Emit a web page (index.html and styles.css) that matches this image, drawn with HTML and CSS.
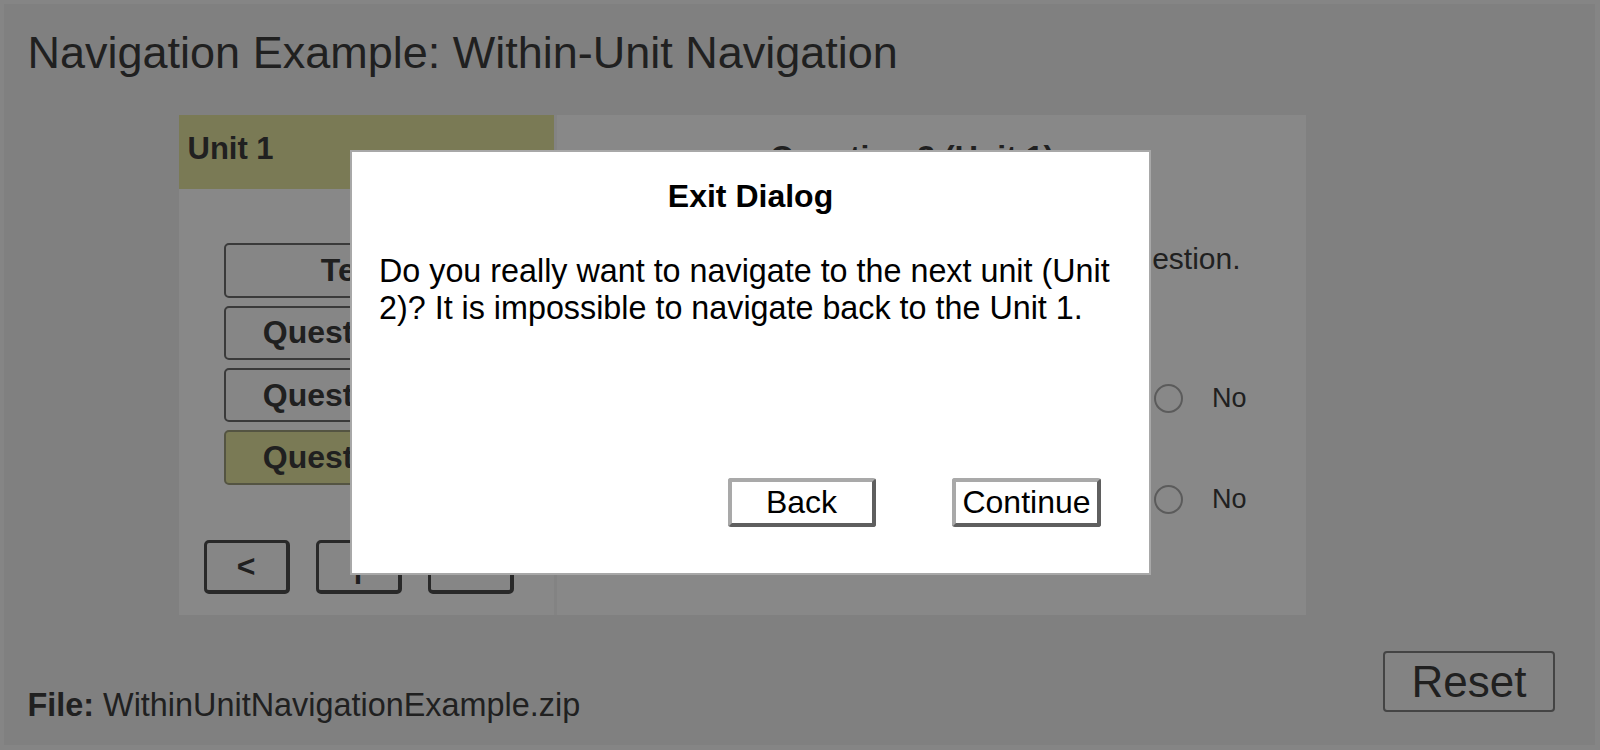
FILE: index.html
```html
<!DOCTYPE html>
<html lang="en">
<head>
<meta charset="utf-8">
<title>Navigation Example: Within-Unit Navigation</title>
<link rel="stylesheet" href="styles.css">
</head>
<body>
<div class="page">
  <h1 class="title">Navigation Example: Within-Unit Navigation</h1>

  <div class="player">
    <aside class="unit-nav">
      <div class="unit-header">Unit 1</div>
      <div class="item-list">
        <button class="item">Text</button>
        <button class="item">Question 1</button>
        <button class="item">Question 2</button>
        <button class="item current">Question 3</button>
      </div>
      <div class="pager">
        <button class="pager-btn">&lt;</button>
        <button class="pager-btn">|</button>
        <button class="pager-btn">&gt;</button>
      </div>
    </aside>

    <section class="content">
      <h2 class="q-title">Question 3 (Unit 1)</h2>
      <p class="q-intro">Please choose one answer for each question.</p>
      <div class="q-row">
        <span class="q-text">Did you like the text?</span>
        <label class="opt"><span class="radio"></span>Yes</label>
        <label class="opt"><span class="radio"></span>No</label>
      </div>
      <div class="q-row">
        <span class="q-text">Was the text easy to read?</span>
        <label class="opt"><span class="radio"></span>Yes</label>
        <label class="opt"><span class="radio"></span>No</label>
      </div>
    </section>
  </div>

  <div class="footer">
    <div class="file"><b>File:</b> WithinUnitNavigationExample.zip</div>
    <button class="reset">Reset</button>
  </div>
</div>

<div class="overlay"></div>

<div class="dialog" role="dialog" aria-labelledby="dlg-title">
  <div class="dialog-title" id="dlg-title">Exit Dialog</div>
  <div class="dialog-body">Do you really want to navigate to the next unit (Unit 2)? It is impossible to navigate back to the Unit 1.</div>
  <div class="dialog-actions">
    <button class="dlg-btn">Back</button>
    <button class="dlg-btn">Continue</button>
  </div>
</div>
</body>
</html>
```

FILE: styles.css
```css
* {
  box-sizing: border-box;
}

html, body {
  margin: 0;
  padding: 0;
  height: 100%;
}

body {
  background: #f2f2f2;
  font-family: "Liberation Sans", Arial, sans-serif;
  color: #3b3b3b;
  overflow: hidden;
}

.page {
  margin: 4px 5px 5px 4px;
  height: calc(100% - 9px);
  background: #e9e9e9;
  display: flex;
  flex-direction: column;
}

.title {
  margin: 22.6px 0 0 23.5px;
  font-size: 45px;
  font-weight: normal;
  line-height: normal;
}

/* ---------- player ---------- */
.player {
  margin: 36.7px 0 0 174.5px;
  width: 1127px;
  height: 500px;
  background: #f7f7f7;
  display: flex;
}

.unit-nav {
  width: 378px;
  border-right: 3px solid #eeeeee;
  display: flex;
  flex-direction: column;
}

.unit-header {
  height: 74px;
  padding: 16px 9px;
  background: #dfdf9c;
  font-size: 31px;
  font-weight: bold;
  line-height: 36px;
}

.item-list {
  margin: 54px 0 0 45px;
  display: flex;
  flex-direction: column;
  gap: 8px;
}

.item {
  width: 244px;
  height: 54.33px;
  padding: 0;
  border: 2px solid #6a6a6a;
  border-radius: 5px;
  background: #f5f5f5;
  color: #3b3b3b;
  font-family: inherit;
  font-size: 32px;
  font-weight: bold;
}

.item:first-child {
  padding-left: 14px;
}

.item.current {
  background: #dfdf9c;
  border-color: #9a9a78;
}

.pager {
  margin: 55px 0 0 25px;
  display: flex;
  gap: 26px;
}

.pager-btn {
  width: 86px;
  height: 54px;
  padding: 0;
  border-style: solid;
  border-color: #4c4c4c;
  border-width: 3px 4px 4px 3px;
  border-radius: 5px;
  background: #f5f5f5;
  color: #3b3b3b;
  font-family: inherit;
  font-size: 32px;
  font-weight: bold;
}

.content {
  flex: 1;
  padding: 23.5px 38px 0 0;
}

.q-title {
  margin: 0;
  text-align: center;
  font-size: 32px;
  font-weight: bold;
  line-height: normal;
}

.q-intro {
  margin: 66px 0 0 0;
  text-align: center;
  font-size: 30px;
  line-height: normal;
  padding-left: 50px;
}

.q-row {
  margin-top: 51.5px;
  height: 50px;
  display: flex;
  align-items: center;
  padding-right: 21px;
  font-size: 27px;
}

.q-intro + .q-row {
  margin-top: 97.5px;
}

.q-text {
  flex: 1;
  padding-left: 40px;
}

.opt {
  display: flex;
  align-items: center;
  margin-left: 26px;
}

.radio {
  width: 29px;
  height: 29px;
  border: 2px solid #a7a7a7;
  border-radius: 50%;
  margin-right: 29px;
}

/* ---------- footer ---------- */
.footer {
  margin: 36px 40px 0 23.5px;
  display: flex;
  justify-content: space-between;
  align-items: flex-start;
}

.file {
  margin-top: 36px;
  font-size: 32.4px;
  line-height: normal;
}

.reset {
  width: 172px;
  height: 61px;
  padding: 0;
  border: 2px solid #7c7c7c;
  border-radius: 4px;
  background: #efefef;
  color: #3b3b3b;
  font-family: inherit;
  font-size: 44px;
}

/* ---------- modal ---------- */
.overlay {
  position: fixed;
  inset: 0;
  background: rgba(0, 0, 0, 0.45);
  z-index: 1;
}

.dialog {
  position: absolute;
  left: 350px;
  top: 150px;
  width: 801px;
  height: 425px;
  z-index: 2;
  background: #ffffff;
  border: 2px solid #a8a8a8;
  color: #000;
  display: flex;
  flex-direction: column;
  padding: 25.5px 0 46.5px 27px;
}

.dialog-title {
  text-align: center;
  font-size: 32px;
  font-weight: bold;
  line-height: normal;
  padding-right: 27px;
}

.dialog-body {
  margin-top: 38px;
  padding-right: 20px;
  font-size: 32.3px;
  line-height: normal;
}

.dialog-actions {
  margin-top: auto;
  display: flex;
  justify-content: flex-end;
  gap: 76.5px;
  padding-right: 48px;
}

.dlg-btn {
  width: 148px;
  height: 49px;
  padding: 0;
  background: #ffffff;
  border: 4px solid;
  border-color: #a9a9a9 #5f5f5f #5f5f5f #a9a9a9;
  border-radius: 3px;
  color: #000;
  font-family: inherit;
  font-size: 32px;
}

.dlg-btn + .dlg-btn {
  width: 149px;
}
```
